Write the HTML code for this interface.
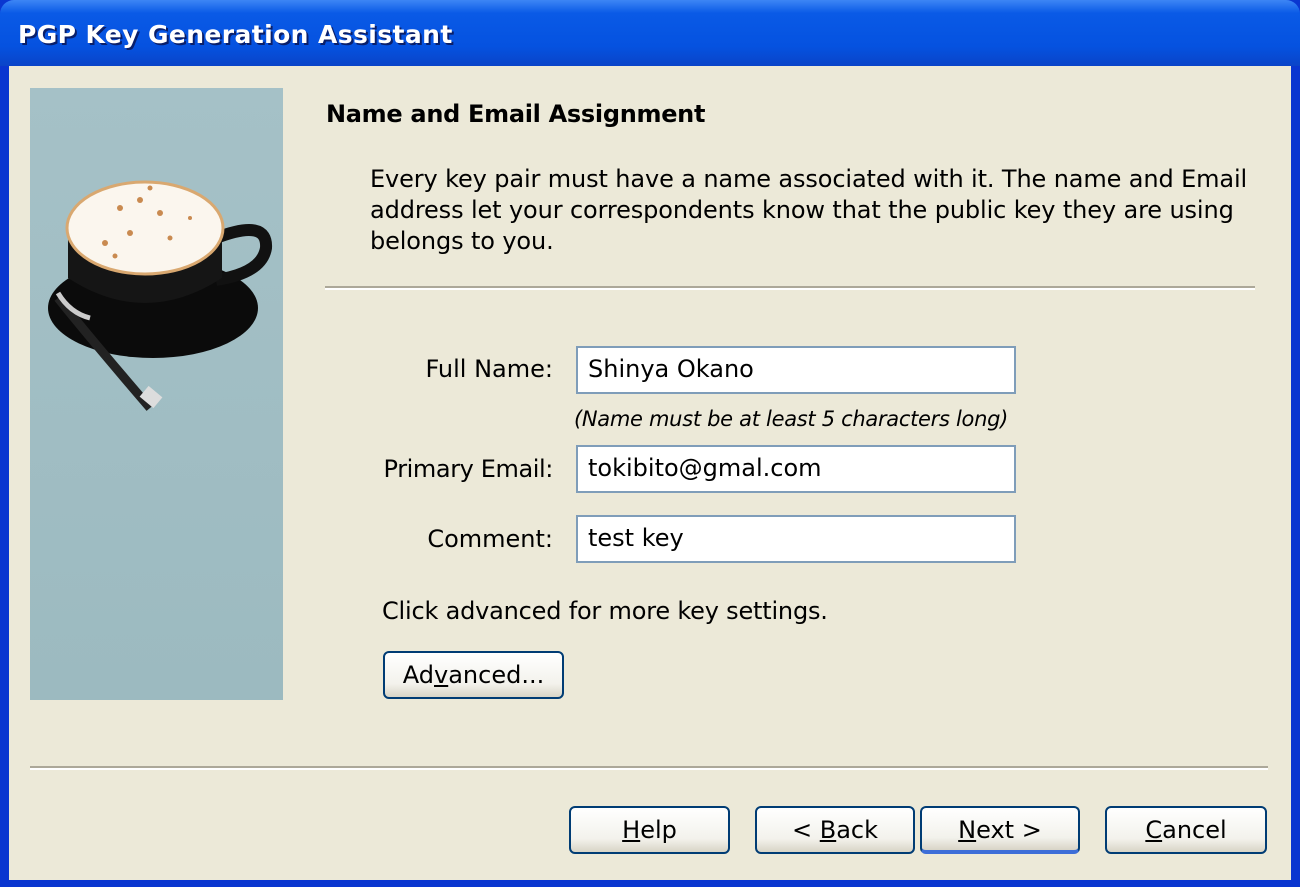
<!DOCTYPE html>
<html><head><meta charset="utf-8"><style>
*{margin:0;padding:0;box-sizing:border-box}
body{width:1300px;height:887px;overflow:hidden;background:#0a36d0;font-family:Tahoma,"DejaVu Sans","Liberation Sans",sans-serif;position:relative}
.title{position:absolute;left:0;top:0;width:1300px;height:66px;background:linear-gradient(#3d86f5,#0a5ae6 20%,#0552e0 70%,#0a44c8);border-radius:14px 14px 0 0}
.title span{position:absolute;left:18px;top:20px;color:#fff;font-weight:bold;font-size:25px;letter-spacing:0.4px;text-shadow:2px 2px 0 #0a1f6a}
.client{position:absolute;left:9px;top:66px;width:1282px;height:814px;background:#ece9d8}
.a{position:absolute;white-space:nowrap;color:#000}
.inp{position:absolute;left:576px;width:440px;height:48px;background:#fff;border:2px solid #7f9db9;font-size:24px;padding:7px 10px}
.btn{position:absolute;height:48px;border:2px solid #003c74;border-radius:6px;background:linear-gradient(#fff,#f3f2ec 70%,#d8d4c6);font-size:24px;text-align:center;line-height:44px;color:#000}
.sep{position:absolute;height:4px;border-top:2px solid #aca899;border-bottom:2px solid #fff}
</style></head><body>
<div class="title"><span>PGP Key Generation Assistant</span></div>
<div class="client"></div>
<div style="position:absolute;left:30px;top:88px;width:253px;height:612px;background:linear-gradient(#a5c1c7,#9cbac0)"></div>
<svg style="position:absolute;left:30px;top:88px" width="253" height="330">
<ellipse cx="123" cy="220" rx="105" ry="50" fill="#0b0b0b"/>
<path d="M28 210 Q60 250 120 320" stroke="#222" stroke-width="9" fill="none"/>
<path d="M28 205 Q40 225 60 230" stroke="#ccc" stroke-width="5" fill="none"/>
<rect x="112" y="302" width="18" height="14" fill="#ddd" transform="rotate(40 121 309)"/>
<path d="M186 150 Q238 130 236 160 Q232 185 186 192" stroke="#111" stroke-width="12" fill="none"/>
<path d="M38 140 L38 190 Q115 240 192 190 L192 140 Z" fill="#151515"/>
<ellipse cx="115" cy="140" rx="78" ry="46" fill="#fbf6ee" stroke="#d9a870" stroke-width="3"/>
<g fill="#c98a50"><circle cx="90" cy="120" r="3"/><circle cx="110" cy="112" r="3"/><circle cx="130" cy="125" r="3"/><circle cx="100" cy="145" r="3"/><circle cx="75" cy="155" r="3"/><circle cx="140" cy="150" r="2.5"/><circle cx="120" cy="100" r="2.5"/><circle cx="85" cy="168" r="2.5"/><circle cx="160" cy="130" r="2"/></g>
</svg>
<div class="a" style="left:326px;top:100px;font-size:24px;font-weight:bold;letter-spacing:-0.3px">Name and Email Assignment</div>
<div class="a" style="left:370px;top:164px;font-size:24px;line-height:31px;letter-spacing:-0.12px">Every key pair must have a name associated with it. The name and Email<br>address let your correspondents know that the public key they are using<br>belongs to you.</div>
<div class="sep" style="left:325px;top:286px;width:930px"></div>
<div class="a" style="left:330px;width:223px;text-align:right;top:355px;font-size:24px">Full Name:</div>
<div class="inp" style="top:346px">Shinya Okano</div>
<div class="a" style="left:574px;top:407px;font-size:21px;font-style:italic;letter-spacing:-0.3px">(Name must be at least 5 characters long)</div>
<div class="a" style="left:330px;width:223px;text-align:right;top:455px;font-size:24px;letter-spacing:-0.4px">Primary Email:</div>
<div class="inp" style="top:445px">tokibito@gmal.com</div>
<div class="a" style="left:330px;width:223px;text-align:right;top:525px;font-size:24px">Comment:</div>
<div class="inp" style="top:515px">test key</div>
<div class="a" style="left:382px;top:597px;font-size:24px;letter-spacing:-0.2px">Click advanced for more key settings.</div>
<div class="btn" style="left:383px;top:651px;width:181px">Ad<u>v</u>anced...</div>
<div class="sep" style="left:30px;top:766px;width:1238px"></div>
<div class="btn" style="left:569px;top:806px;width:161px"><u>H</u>elp</div>
<div class="btn" style="left:755px;top:806px;width:160px">&lt; <u>B</u>ack</div>
<div class="btn" style="left:920px;top:806px;width:160px;border-bottom:4px solid #3d6ed8"><u>N</u>ext &gt;</div>
<div class="btn" style="left:1105px;top:806px;width:162px"><u>C</u>ancel</div>
</body></html>
